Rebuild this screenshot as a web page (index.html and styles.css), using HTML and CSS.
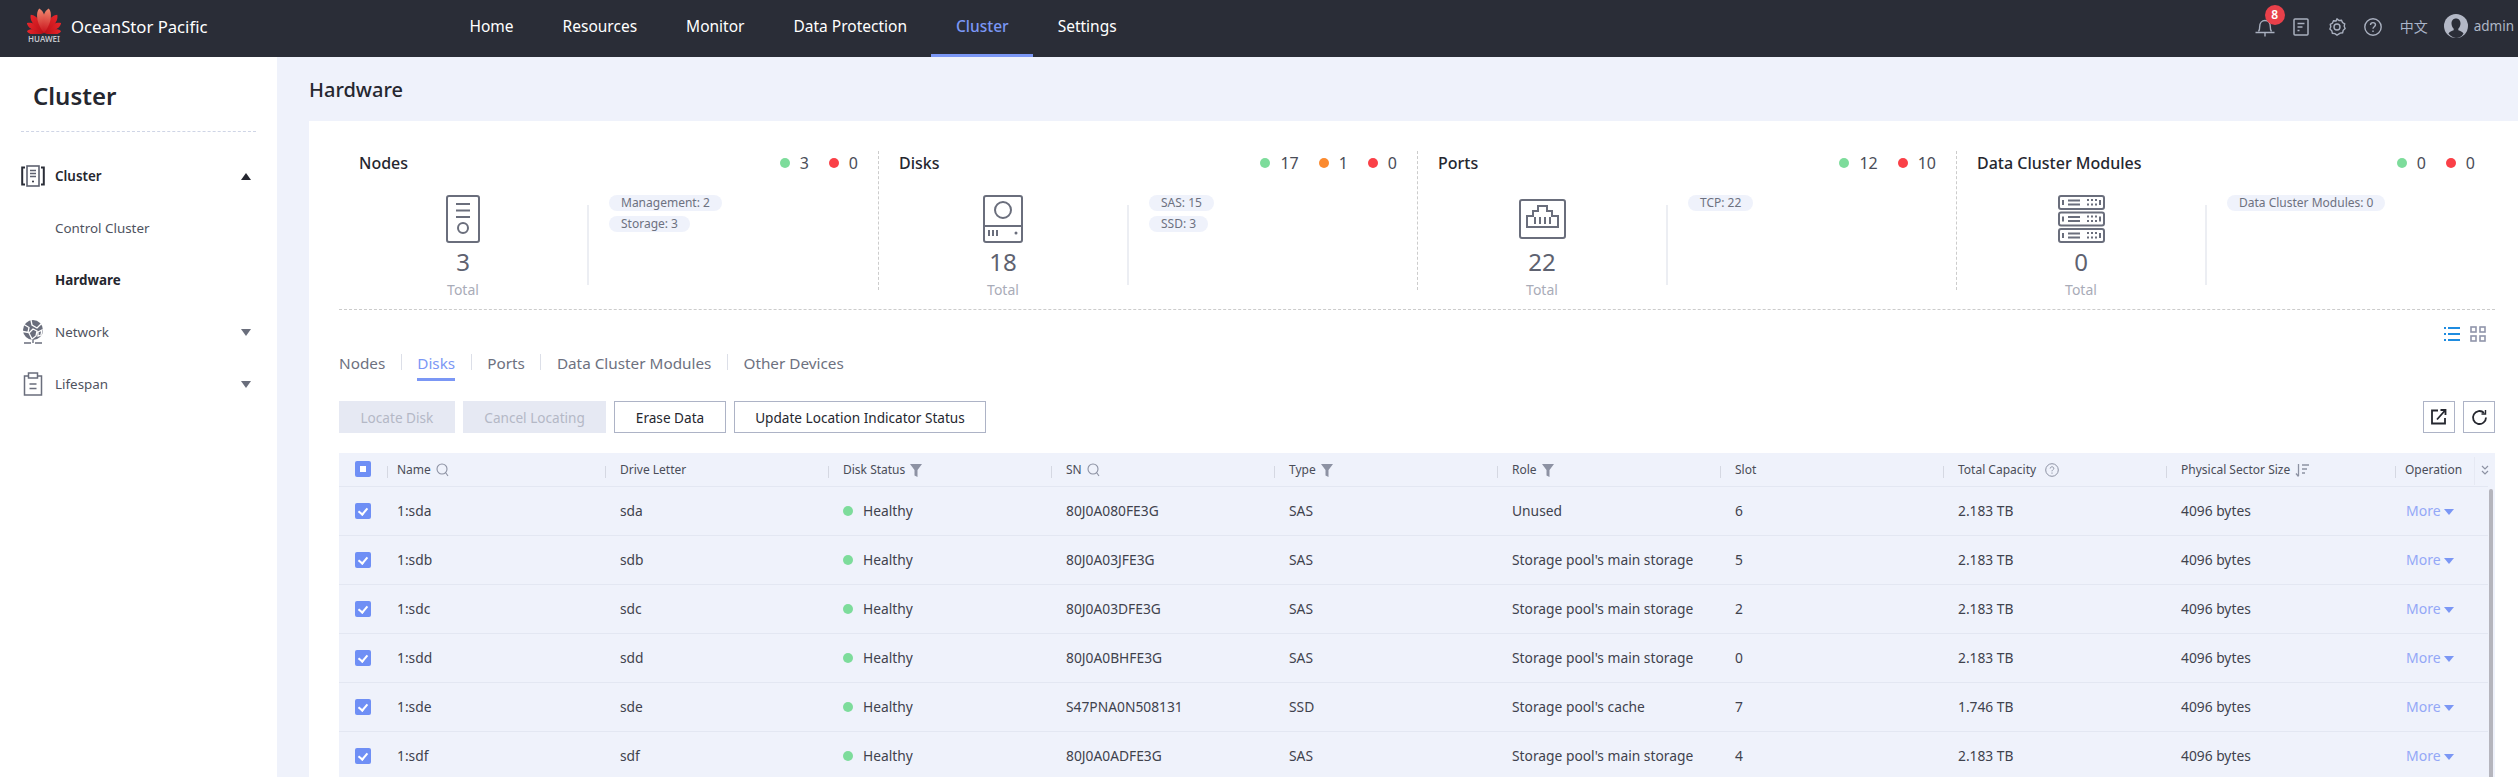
FILE: index.html
```html
<!DOCTYPE html>
<html lang="en">
<head>
  <meta charset="UTF-8">
  <meta name="viewport" content="width=device-width, initial-scale=1.0">
  <title>OceanStor Pacific - Hardware</title>
  <link rel="stylesheet" href="styles.css">
</head>
<body>
  <svg class="defs" width="0" height="0">
    <defs>
      <linearGradient id="petal-hot" x1="0" y1="1" x2="0" y2="0">
        <stop offset="0" stop-color="#c8101a"/>
        <stop offset="1" stop-color="#f28a70"/>
      </linearGradient>
      <linearGradient id="petal-red" x1="0" y1="1" x2="0" y2="0">
        <stop offset="0" stop-color="#b80f16"/>
        <stop offset="1" stop-color="#e8262b"/>
      </linearGradient>
      <path id="petal" d="M0 0C-2.600-5-3.300-10-2.400-14-1.900-16-.8-17.400 0-18 .8-17.400 1.900-16 2.400-14 3.300-10 2.600-5 0 0Z"/>
    </defs>
  </svg>

  <header class="topbar">
    <div class="brand">
      <div class="logo">
        <svg width="34" height="26" viewBox="-17 -25 34 26">
          <use href="#petal" fill="url(#petal-red)" transform="rotate(-84) scale(.95)"/>
          <use href="#petal" fill="url(#petal-red)" transform="rotate(84) scale(.95)"/>
          <use href="#petal" fill="url(#petal-red)" transform="rotate(-60) scale(1.1)"/>
          <use href="#petal" fill="url(#petal-red)" transform="rotate(60) scale(1.1)"/>
          <use href="#petal" fill="url(#petal-red)" transform="rotate(-36) scale(1.25)"/>
          <use href="#petal" fill="url(#petal-red)" transform="rotate(36) scale(1.25)"/>
          <use href="#petal" fill="url(#petal-hot)" transform="rotate(-11) scale(1.38)"/>
          <use href="#petal" fill="url(#petal-hot)" transform="rotate(11) scale(1.38)"/>
        </svg>
        <span class="logo-word">HUAWEI</span>
      </div>
      <span class="product">OceanStor Pacific</span>
    </div>
    <nav class="mainnav">
      <a>Home</a>
      <a>Resources</a>
      <a>Monitor</a>
      <a>Data Protection</a>
      <a class="active">Cluster</a>
      <a>Settings</a>
    </nav>
    <div class="topright">
      <span class="bell">
        <svg width="20" height="20" viewBox="0 0 20 20" fill="none" stroke="#a9b0bf" stroke-width="1.4">
          <path d="M3.5 14.5c1-1 1.2-2.500 1.200-5C4.700 6 7 3.500 10 3.500s5.300 2.500 5.300 6c0 2.500.2 4 1.200 5"/>
          <path d="M0.500 15.500h19M10 15.500v4"/>
        </svg>
        <span class="badge">8</span>
      </span>
      <svg class="tool doc" width="16" height="18" viewBox="0 0 16 18" fill="none" stroke="#a9b0bf" stroke-width="1.500">
        <rect x="1" y="1" width="14" height="16" rx="1"/>
        <path d="M4.500 5.500h7M4.500 9h5M4.500 12.500h2"/>
      </svg>
      <svg class="tool gear" width="18" height="18" viewBox="0 0 18 18" fill="none" stroke="#a9b0bf" stroke-width="1.400">
        <path d="M9 .9l2 1.600 2.500-.2 1 2.300 2.200 1.200-.5 2.500.9 2.300-1.900 1.700-.6 2.500-2.500.3L9 17.100l-2.100-1.500-2.500-.3-.6-2.500-1.900-1.700.9-2.300-.5-2.500 2.200-1.200 1-2.300 2.500.2z"/>
        <circle cx="9" cy="9" r="3"/>
      </svg>
      <svg class="tool help" width="18" height="18" viewBox="0 0 18 18" fill="none" stroke="#a9b0bf" stroke-width="1.400">
        <circle cx="9" cy="9" r="8.200"/>
        <path d="M6.500 7c0-1.500 1.100-2.400 2.500-2.400s2.500.9 2.500 2.200c0 1.800-2.500 2-2.500 4"/>
        <path d="M9 12.600v1.500"/>
      </svg>
      <span class="lang">中文</span>
      <span class="user">
        <svg width="24" height="24" viewBox="0 0 24 24">
          <circle cx="12" cy="12" r="12" fill="#b3b8c6"/>
          <path d="M12 4.500c-3 0-4.500 2.300-4.500 5 0 2.200 1 4 2.200 5.200v1.600c-2 .7-4 1.500-5.200 3.200A11.800 11.800 0 0 0 12 24c2.900 0 5.500-1 7.500-4.500-1.200-1.700-3.200-2.500-5.200-3.200v-1.600c1.200-1.200 2.200-3 2.200-5.200 0-2.700-1.500-5-4.500-5z" fill="#2a2d37"/>
        </svg>
        admin
      </span>
    </div>
  </header>

  <div class="layout">
    <aside class="sidebar">
      <h2 class="side-title">Cluster</h2>
      <ul class="side-menu">
        <li class="side-item open">
          <svg width="24" height="22" viewBox="0 0 24 22" fill="none" stroke="#2a2d37" stroke-width="2">
            <rect x="6" y="1" width="12" height="20" stroke-width="1.600" stroke="#5e6270"/>
            <path d="M4 2.500H1.200v17H4M20 2.500h2.800v17H20"/>
            <path d="M9 5.500h6M9 8.500h6M9 11.500h6" stroke-width="1.400" stroke="#5e6270"/>
            <circle cx="12" cy="16.500" r="1" fill="#2a2d37" stroke="none"/>
          </svg>
          <span>Cluster</span>
          <i class="caret up"></i>
        </li>
        <li class="side-sub">Control Cluster</li>
        <li class="side-sub current">Hardware</li>
        <li class="side-item">
          <svg width="24" height="24" viewBox="0 0 24 24" fill="#6a6e7c">
            <circle cx="12" cy="10" r="10"/>
            <path d="M3 4.500l5 3 -1 5 -5-1M10 0l1 5 5 3 4-4M8 13l4-4 4 2-1 5-4 3zM17 12l4-2-1 5-3 1z" fill="none" stroke="#fff" stroke-width="1.300"/>
            <path d="M3 23h7M14 23h7M12 20v3" fill="none" stroke="#6a6e7c" stroke-width="1.400"/>
          </svg>
          <span>Network</span>
          <i class="caret"></i>
        </li>
        <li class="side-item">
          <svg width="24" height="24" viewBox="0 0 24 24" fill="none" stroke="#6a6e7c" stroke-width="1.500">
            <path d="M7 4H3.500v19h17V4H17"/>
            <rect x="7.500" y="1" width="9" height="5"/>
            <path d="M8.500 12h7M8.500 16.500h7"/>
          </svg>
          <span>Lifespan</span>
          <i class="caret"></i>
        </li>
      </ul>
    </aside>

    <main class="content">
      <h1 class="page-title">Hardware</h1>
      <section class="card">
        <div class="stats">
          <div class="stat">
            <div class="stat-head">
              <span class="stat-name">Nodes</span>
              <span class="stat-states">
                <span class="state"><i class="dot green"></i>3</span>
                <span class="state"><i class="dot red"></i>0</span>
              </span>
            </div>
            <div class="stat-body">
              <div class="stat-total">
                <div class="stat-icon">
                  <svg width="34" height="48" viewBox="0 0 34 48" fill="none" stroke="#6a6e7c" stroke-width="2">
                    <rect x="1" y="1" width="32" height="46" rx="2"/>
                    <path d="M10 9h14M10 15.500h14M10 22h14"/>
                    <circle cx="17" cy="33" r="5"/>
                  </svg>
                </div>
                <div class="stat-num">3</div>
                <div class="stat-label">Total</div>
              </div>
              <div class="stat-tags">
                <span class="tag">Management: 2</span>
                <span class="tag">Storage: 3</span>
              </div>
            </div>
          </div>

          <div class="stat">
            <div class="stat-head">
              <span class="stat-name">Disks</span>
              <span class="stat-states">
                <span class="state"><i class="dot green"></i>17</span>
                <span class="state"><i class="dot orange"></i>1</span>
                <span class="state"><i class="dot red"></i>0</span>
              </span>
            </div>
            <div class="stat-body">
              <div class="stat-total">
                <div class="stat-icon">
                  <svg width="40" height="48" viewBox="0 0 40 48" fill="none" stroke="#6a6e7c" stroke-width="2">
                    <rect x="1" y="1" width="38" height="46" rx="2"/>
                    <circle cx="20" cy="15" r="8"/>
                    <path d="M1 31h38"/>
                    <path d="M6 35v6M10 35v6M14 35v6"/>
                    <circle cx="33" cy="38" r="1.500" fill="#6a6e7c" stroke="none"/>
                  </svg>
                </div>
                <div class="stat-num">18</div>
                <div class="stat-label">Total</div>
              </div>
              <div class="stat-tags">
                <span class="tag">SAS: 15</span>
                <span class="tag">SSD: 3</span>
              </div>
            </div>
          </div>

          <div class="stat">
            <div class="stat-head">
              <span class="stat-name">Ports</span>
              <span class="stat-states">
                <span class="state"><i class="dot green"></i>12</span>
                <span class="state"><i class="dot red"></i>10</span>
              </span>
            </div>
            <div class="stat-body">
              <div class="stat-total">
                <div class="stat-icon">
                  <svg width="47" height="40" viewBox="0 0 47 40" fill="none" stroke="#6a6e7c" stroke-width="2">
                    <rect x="1" y="1" width="45" height="38" rx="2"/>
                    <path d="M8 28V17h6v-5h5V7h9v5h5v5h6v11z"/>
                    <path d="M16 18v7M21 18v7M26 18v7M31 18v7"/>
                  </svg>
                </div>
                <div class="stat-num">22</div>
                <div class="stat-label">Total</div>
              </div>
              <div class="stat-tags">
                <span class="tag">TCP: 22</span>
              </div>
            </div>
          </div>

          <div class="stat">
            <div class="stat-head">
              <span class="stat-name">Data Cluster Modules</span>
              <span class="stat-states">
                <span class="state"><i class="dot green"></i>0</span>
                <span class="state"><i class="dot red"></i>0</span>
              </span>
            </div>
            <div class="stat-body">
              <div class="stat-total">
                <div class="stat-icon">
                  <svg width="47" height="48" viewBox="0 0 47 48">
                    <defs>
                      <g id="module">
                        <rect x="1" y="1" width="45" height="13" rx="2" fill="none" stroke="#6a6e7c" stroke-width="2"/>
                        <path d="M5 5v5M10 5.500h12M10 9.500h12M29 5h2M33 5h2M37 5h2M29 9.500h2M33 9.500h2M37 9.500h2M42 5v5" stroke="#6a6e7c" stroke-width="2" fill="none"/>
                      </g>
                    </defs>
                    <use href="#module"/>
                    <use href="#module" y="16.500"/>
                    <use href="#module" y="33"/>
                  </svg>
                </div>
                <div class="stat-num">0</div>
                <div class="stat-label">Total</div>
              </div>
              <div class="stat-tags">
                <span class="tag">Data Cluster Modules: 0</span>
              </div>
            </div>
          </div>
        </div>

        <div class="view-switch">
          <svg width="16" height="16" viewBox="0 0 16 16" fill="#1f8ce0">
            <rect x="0" y="1" width="2" height="2"/><rect x="4" y="1" width="12" height="2"/>
            <rect x="0" y="7" width="2" height="2"/><rect x="4" y="7" width="12" height="2"/>
            <rect x="0" y="13" width="2" height="2"/><rect x="4" y="13" width="12" height="2"/>
          </svg>
          <svg width="16" height="16" viewBox="0 0 16 16" fill="none" stroke="#9095ab" stroke-width="1.600">
            <rect x="1" y="1" width="5" height="5"/><rect x="10" y="1" width="5" height="5"/>
            <rect x="1" y="10" width="5" height="5"/><rect x="10" y="10" width="5" height="5"/>
          </svg>
        </div>

        <div class="tabs">
          <a class="tab">Nodes</a><i class="tab-sep"></i>
          <a class="tab active">Disks</a><i class="tab-sep"></i>
          <a class="tab">Ports</a><i class="tab-sep"></i>
          <a class="tab">Data Cluster Modules</a><i class="tab-sep"></i>
          <a class="tab">Other Devices</a>
        </div>

        <div class="toolbar">
          <button class="btn" disabled>Locate Disk</button>
          <button class="btn" disabled>Cancel Locating</button>
          <button class="btn">Erase Data</button>
          <button class="btn">Update Location Indicator Status</button>
          <span class="toolbar-right">
            <button class="btn icon-btn">
              <svg width="16" height="16" viewBox="0 0 16 16" fill="none" stroke="#25272f" stroke-width="1.800">
                <path d="M7 1.500H1v13h13V9"/>
                <path d="M6 10.500L14 1.500M9.500 1h5v5"/>
              </svg>
            </button>
            <button class="btn icon-btn">
              <svg width="17" height="17" viewBox="0 0 17 17" fill="none" stroke="#25272f" stroke-width="1.800">
                <path d="M15 8.500a6.500 6.500 0 1 1-2-4.700"/>
                <path d="M14.500 1v4h-4" stroke-width="1.400"/>
              </svg>
            </button>
          </span>
        </div>

        <div class="table-wrap">
          <table class="disks">
            <colgroup>
              <col class="c-check"><col class="c-name"><col class="c-std"><col class="c-std"><col class="c-std"><col class="c-std"><col class="c-std"><col class="c-std"><col class="c-std"><col class="c-phys"><col class="c-op">
            </colgroup>
            <thead>
              <tr>
                <th><span class="check partial"></span></th>
                <th class="first">Name <svg class="h-icon" width="13" height="14" viewBox="0 0 13 14" fill="none" stroke="#8d92a3" stroke-width="1.100"><circle cx="6" cy="6" r="5"/><path d="M9.500 9.500l2.500 3.500"/></svg></th>
                <th>Drive Letter</th>
                <th>Disk Status <svg class="h-icon" width="12" height="13" viewBox="0 0 12 13" fill="#8d92a3"><path d="M0 0h12L7.500 6v7l-3-1.500V6z"/></svg></th>
                <th>SN <svg class="h-icon" width="13" height="14" viewBox="0 0 13 14" fill="none" stroke="#8d92a3" stroke-width="1.100"><circle cx="6" cy="6" r="5"/><path d="M9.500 9.500l2.500 3.500"/></svg></th>
                <th>Type <svg class="h-icon" width="12" height="13" viewBox="0 0 12 13" fill="#8d92a3"><path d="M0 0h12L7.500 6v7l-3-1.500V6z"/></svg></th>
                <th>Role <svg class="h-icon" width="12" height="13" viewBox="0 0 12 13" fill="#8d92a3"><path d="M0 0h12L7.500 6v7l-3-1.500V6z"/></svg></th>
                <th>Slot</th>
                <th>Total Capacity <svg class="h-icon help-ic" width="14" height="14" viewBox="0 0 14 14" fill="none" stroke="#8d92a3" stroke-width="1"><circle cx="7" cy="7" r="6.300"/><path d="M5.200 5.500c0-1 .8-1.700 1.800-1.700s1.800.7 1.800 1.600c0 1.300-1.800 1.400-1.800 2.900M7 9.500v1.200"/></svg></th>
                <th>Physical Sector Size <svg class="h-icon" width="14" height="13" viewBox="0 0 14 13" fill="none" stroke="#8d92a3" stroke-width="1.300"><path d="M3.500 0v12M1 9.500l2.500 3M7 1h7M7 5h5M7 9h3"/></svg></th>
                <th class="op-head">Operation
                  <svg class="expand" width="8" height="10" viewBox="0 0 8 10" fill="none" stroke="#8d92a3" stroke-width="1.200"><path d="M1 1l3 3 3-3M1 6l3 3 3-3"/></svg>
                </th>
              </tr>
            </thead>
            <tbody>
              <tr>
                <td><span class="check"></span></td>
                <td class="first">1:sda</td><td>sda</td>
                <td><i class="dot green"></i>Healthy</td>
                <td>80J0A080FE3G</td><td>SAS</td><td>Unused</td><td>6</td>
                <td>2.183 TB</td><td>4096 bytes</td>
                <td class="op"><a class="more">More<i class="more-caret"></i></a></td>
              </tr>
              <tr>
                <td><span class="check"></span></td>
                <td class="first">1:sdb</td><td>sdb</td>
                <td><i class="dot green"></i>Healthy</td>
                <td>80J0A03JFE3G</td><td>SAS</td><td>Storage pool's main storage</td><td>5</td>
                <td>2.183 TB</td><td>4096 bytes</td>
                <td class="op"><a class="more">More<i class="more-caret"></i></a></td>
              </tr>
              <tr>
                <td><span class="check"></span></td>
                <td class="first">1:sdc</td><td>sdc</td>
                <td><i class="dot green"></i>Healthy</td>
                <td>80J0A03DFE3G</td><td>SAS</td><td>Storage pool's main storage</td><td>2</td>
                <td>2.183 TB</td><td>4096 bytes</td>
                <td class="op"><a class="more">More<i class="more-caret"></i></a></td>
              </tr>
              <tr>
                <td><span class="check"></span></td>
                <td class="first">1:sdd</td><td>sdd</td>
                <td><i class="dot green"></i>Healthy</td>
                <td>80J0A0BHFE3G</td><td>SAS</td><td>Storage pool's main storage</td><td>0</td>
                <td>2.183 TB</td><td>4096 bytes</td>
                <td class="op"><a class="more">More<i class="more-caret"></i></a></td>
              </tr>
              <tr>
                <td><span class="check"></span></td>
                <td class="first">1:sde</td><td>sde</td>
                <td><i class="dot green"></i>Healthy</td>
                <td>S47PNA0N508131</td><td>SSD</td><td>Storage pool's cache</td><td>7</td>
                <td>1.746 TB</td><td>4096 bytes</td>
                <td class="op"><a class="more">More<i class="more-caret"></i></a></td>
              </tr>
              <tr>
                <td><span class="check"></span></td>
                <td class="first">1:sdf</td><td>sdf</td>
                <td><i class="dot green"></i>Healthy</td>
                <td>80J0A0ADFE3G</td><td>SAS</td><td>Storage pool's main storage</td><td>4</td>
                <td>2.183 TB</td><td>4096 bytes</td>
                <td class="op"><a class="more">More<i class="more-caret"></i></a></td>
              </tr>
            </tbody>
          </table>
          <div class="scroll-track"><div class="scroll-thumb"></div></div>
        </div>
      </section>
    </main>
  </div>
</body>
</html>
```

FILE: styles.css
```css
* {
  box-sizing: border-box;
}
html, body {
  margin: 0;
  height: 100vh;
  overflow: hidden;
}
body {
  display: flex;
  flex-direction: column;
  background: #eff2fb;
  color: #25272f;
  font-family: "Noto Sans", "Noto Sans CJK SC", sans-serif;
  font-size: 14px;
}
.defs {
  position: absolute;
}

/* top bar */
.topbar {
  height: 57px;
  flex: none;
  display: flex;
  background: #2a2d37;
  color: #fff;
}
.brand {
  width: 445px;
  padding-left: 27px;
  display: flex;
  gap: 10px;
}
.logo {
  width: 34px;
  padding-top: 8px;
  display: flex;
  flex-direction: column;
  align-items: center;
}
.logo svg {
  display: block;
}
.logo-word {
  font-size: 8px;
  line-height: 9px;
  font-weight: 600;
  color: #c4c6cc;
  white-space: nowrap;
}
.product {
  font-size: 16.700px;
  line-height: 54px;
}
.mainnav {
  display: flex;
  height: 57px;
}
.mainnav a {
  padding: 0 24.500px;
  font-size: 15.500px;
  line-height: 52px;
  color: #fff;
  white-space: nowrap;
}
.mainnav a.active {
  color: #7b97f5;
  font-weight: 500;
  border-bottom: 3px solid #7b97f5;
}
.topright {
  margin-left: auto;
  padding: 0 4px 0 0;
  display: flex;
  align-items: center;
  height: 52px;
}
.bell {
  position: relative;
  display: block;
  height: 20px;
  margin-top: 2px;
  margin-right: 18px;
}
.badge {
  position: absolute;
  left: 10px;
  top: -12px;
  width: 20px;
  height: 20px;
  border-radius: 50%;
  background: #e8404a;
  color: #fff;
  font-size: 12px;
  font-weight: 600;
  line-height: 20px;
  text-align: center;
}
.tool {
  margin-top: 1px;
}
.doc {
  margin-right: 19px;
}
.gear {
  margin-right: 18px;
}
.help {
  margin-right: 18px;
}
.lang {
  color: #a9b4c9;
  margin-right: 16px;
}
.user {
  display: flex;
  align-items: center;
  gap: 6px;
  font-size: 13.500px;
  color: #aeb7c6;
}

/* side menu */
.layout {
  flex: 1;
  display: flex;
  min-height: 0;
}
.sidebar {
  width: 277px;
  flex: none;
  background: #fff;
  padding: 0 21px;
}
.side-title {
  margin: 0;
  padding: 21px 0 0 12px;
  height: 75px;
  border-bottom: 1px dashed #cfd5e6;
  font-size: 24px;
  line-height: 36px;
  font-weight: 600;
  color: #25272f;
}
.side-menu {
  list-style: none;
  margin: 18px 0 0;
  padding: 0;
  font-size: 13.400px;
}
.side-item,
.side-sub {
  height: 52px;
  display: flex;
  align-items: center;
  color: #4f5360;
}
.side-item svg {
  width: 24px;
  flex: none;
  margin-right: 10px;
}
.side-item span {
  flex: 1;
}
.side-item.open {
  color: #25272f;
  font-weight: 600;
}
.side-sub {
  padding-left: 34px;
}
.side-sub.current {
  font-weight: 700;
  color: #25272f;
}
.caret {
  width: 0;
  height: 0;
  margin-right: 5px;
  border-left: 5px solid transparent;
  border-right: 5px solid transparent;
  border-top: 7px solid #6a6e7c;
}
.caret.up {
  border-top: none;
  border-bottom: 7px solid #25272f;
}

/* main area */
.content {
  flex: 1;
  min-width: 0;
  padding: 0 0 0 32px;
}
.page-title {
  margin: 0;
  height: 64px;
  font-size: 20px;
  line-height: 66px;
  font-weight: 500;
  color: #25272f;
}
.card {
  height: 100%;
  background: #fff;
  padding: 30px 23px 0 30px;
}

/* summary */
.stats {
  display: grid;
  grid-template-columns: repeat(4, 1fr);
  height: 159px;
  padding-bottom: 20px;
  border-bottom: 1px dashed #ccc;
}
.stat {
  height: 139px;
  border-left: 1px dashed #ccc;
}
.stat:first-child {
  border-left: none;
}
.stat-head {
  display: flex;
  justify-content: space-between;
  align-items: center;
  height: 24px;
  padding: 0 20px;
  font-size: 16px;
}
.stat-name {
  font-weight: 500;
  color: #25272f;
}
.stat-states {
  display: flex;
  gap: 20px;
  color: #4a4d58;
}
.state {
  display: flex;
  align-items: center;
}
.dot {
  display: inline-block;
  width: 10px;
  height: 10px;
  border-radius: 50%;
  margin-right: 10px;
}
.dot.green {
  background: #7ddc9b;
}
.dot.red {
  background: #fa4047;
}
.dot.orange {
  background: #fb8a2f;
}
.stat-body {
  display: flex;
  margin-top: 20px;
}
.stat-total {
  width: 248px;
  flex: none;
  text-align: center;
}
.stat-icon {
  height: 48px;
  display: flex;
  align-items: center;
  justify-content: center;
}
.stat-num {
  height: 38px;
  font-size: 24px;
  line-height: 38px;
  color: #5e6270;
}
.stat-label {
  line-height: 18px;
  color: #a9acb8;
}
.stat-tags {
  margin-top: 10px;
  height: 80px;
  border-left: 2px solid #eceef3;
  padding-left: 20px;
  display: flex;
  flex-direction: column;
  align-items: flex-start;
  gap: 5px;
}
.tag {
  height: 16px;
  padding: 0 12px;
  border-radius: 8px;
  background: #eff2fb;
  color: #6d7180;
  font-size: 12px;
  line-height: 16px;
  white-space: nowrap;
}
.stat-tags .tag:first-child {
  margin-top: -10px;
}

/* tabs */
.view-switch {
  display: flex;
  justify-content: flex-end;
  gap: 10px;
  height: 16px;
  margin-top: 16px;
  padding-right: 9px;
}
.tabs {
  display: flex;
  height: 32px;
  margin-top: 7px;
  font-size: 15.300px;
  line-height: 28px;
  color: #6d7180;
}
.tab {
  height: 32px;
}
.tab.active {
  color: #7b97f5;
  border-bottom: 3px solid #7b97f5;
}
.tab-sep {
  width: 1px;
  height: 16px;
  margin: 5px 15.500px 0;
  background: #dcdfe8;
}

/* buttons */
.toolbar {
  display: flex;
  gap: 8px;
  margin-top: 20px;
}
.btn {
  height: 32px;
  padding: 0 20.500px;
  border: 1px solid #adb3c6;
  border-radius: 0;
  background: #fff;
  color: #25272f;
  font-family: inherit;
  font-size: 13.600px;
}
.btn:disabled {
  background: #e6e9f3;
  border-color: #e6e9f3;
  color: #b4b8c6;
}
.toolbar-right {
  margin-left: auto;
  display: flex;
  gap: 8px;
}
.icon-btn {
  width: 32px;
  padding: 0;
  display: flex;
  align-items: center;
  justify-content: center;
}

/* table */
.table-wrap {
  position: relative;
  margin-top: 20px;
}
.disks {
  width: 100%;
  table-layout: fixed;
  border-collapse: collapse;
  background: #eff2fb;
  font-size: 13.800px;
}
.c-check { width: 48px; }
.c-name { width: 218px; }
.c-std { width: 223px; }
.c-phys { width: 229px; }
.c-op { width: 100px; }
.disks th {
  position: relative;
  height: 33px;
  padding: 0 0 0 15px;
  text-align: left;
  font-size: 12px;
  font-weight: 400;
  color: #4a4d58;
  border-bottom: 1px solid #e3e7f2;
  white-space: nowrap;
}
.disks th + th::before {
  content: "";
  position: absolute;
  left: 0;
  top: 13px;
  width: 1px;
  height: 12px;
  background: #d5d8e2;
}
.disks td {
  height: 49px;
  padding: 0 0 0 15px;
  color: #3f424d;
  border-bottom: 1px solid #e3e7f2;
  white-space: nowrap;
}
.disks th:first-child,
.disks td:first-child {
  padding-left: 16px;
}
.disks th.first,
.disks td.first {
  padding-left: 10px;
}
.h-icon {
  vertical-align: -3px;
  margin-left: 2px;
}
.help-ic {
  margin-left: 6px;
}
.disks th.op-head {
  padding-left: 10px;
}
.expand {
  position: absolute;
  right: 6px;
  top: 12px;
}
.op-head::after {
  content: "";
  position: absolute;
  right: 20px;
  top: 4px;
  width: 1px;
  height: 28px;
  background: #e6e9f3;
}
.check {
  display: block;
  position: relative;
  width: 16px;
  height: 16px;
  border-radius: 2px;
  background: #6f8ff5;
}
.check::after {
  content: "";
  position: absolute;
  left: 5px;
  top: 3px;
  width: 4px;
  height: 7px;
  border: solid #fff;
  border-width: 0 2px 2px 0;
  transform: rotate(40deg);
}
.check.partial::after {
  left: 5px;
  top: 5px;
  width: 6px;
  height: 6px;
  border: none;
  background: #fff;
  transform: none;
}
.disks td.op {
  padding-left: 11px;
}
.more {
  font-size: 14px;
  color: #94a8f7;
}
.more-caret {
  display: inline-block;
  width: 0;
  height: 0;
  margin-left: 3px;
  vertical-align: 1px;
  border-left: 5px solid transparent;
  border-right: 5px solid transparent;
  border-top: 6px solid #7b97f5;
}
.scroll-track {
  position: absolute;
  right: 0;
  top: 33px;
  bottom: 0;
  width: 7px;
  background: #eff2fb;
}
.scroll-thumb {
  position: absolute;
  top: 3px;
  bottom: 0;
  left: 1px;
  width: 4px;
  border-radius: 2px;
  background: #b5b5bd;
}
```
